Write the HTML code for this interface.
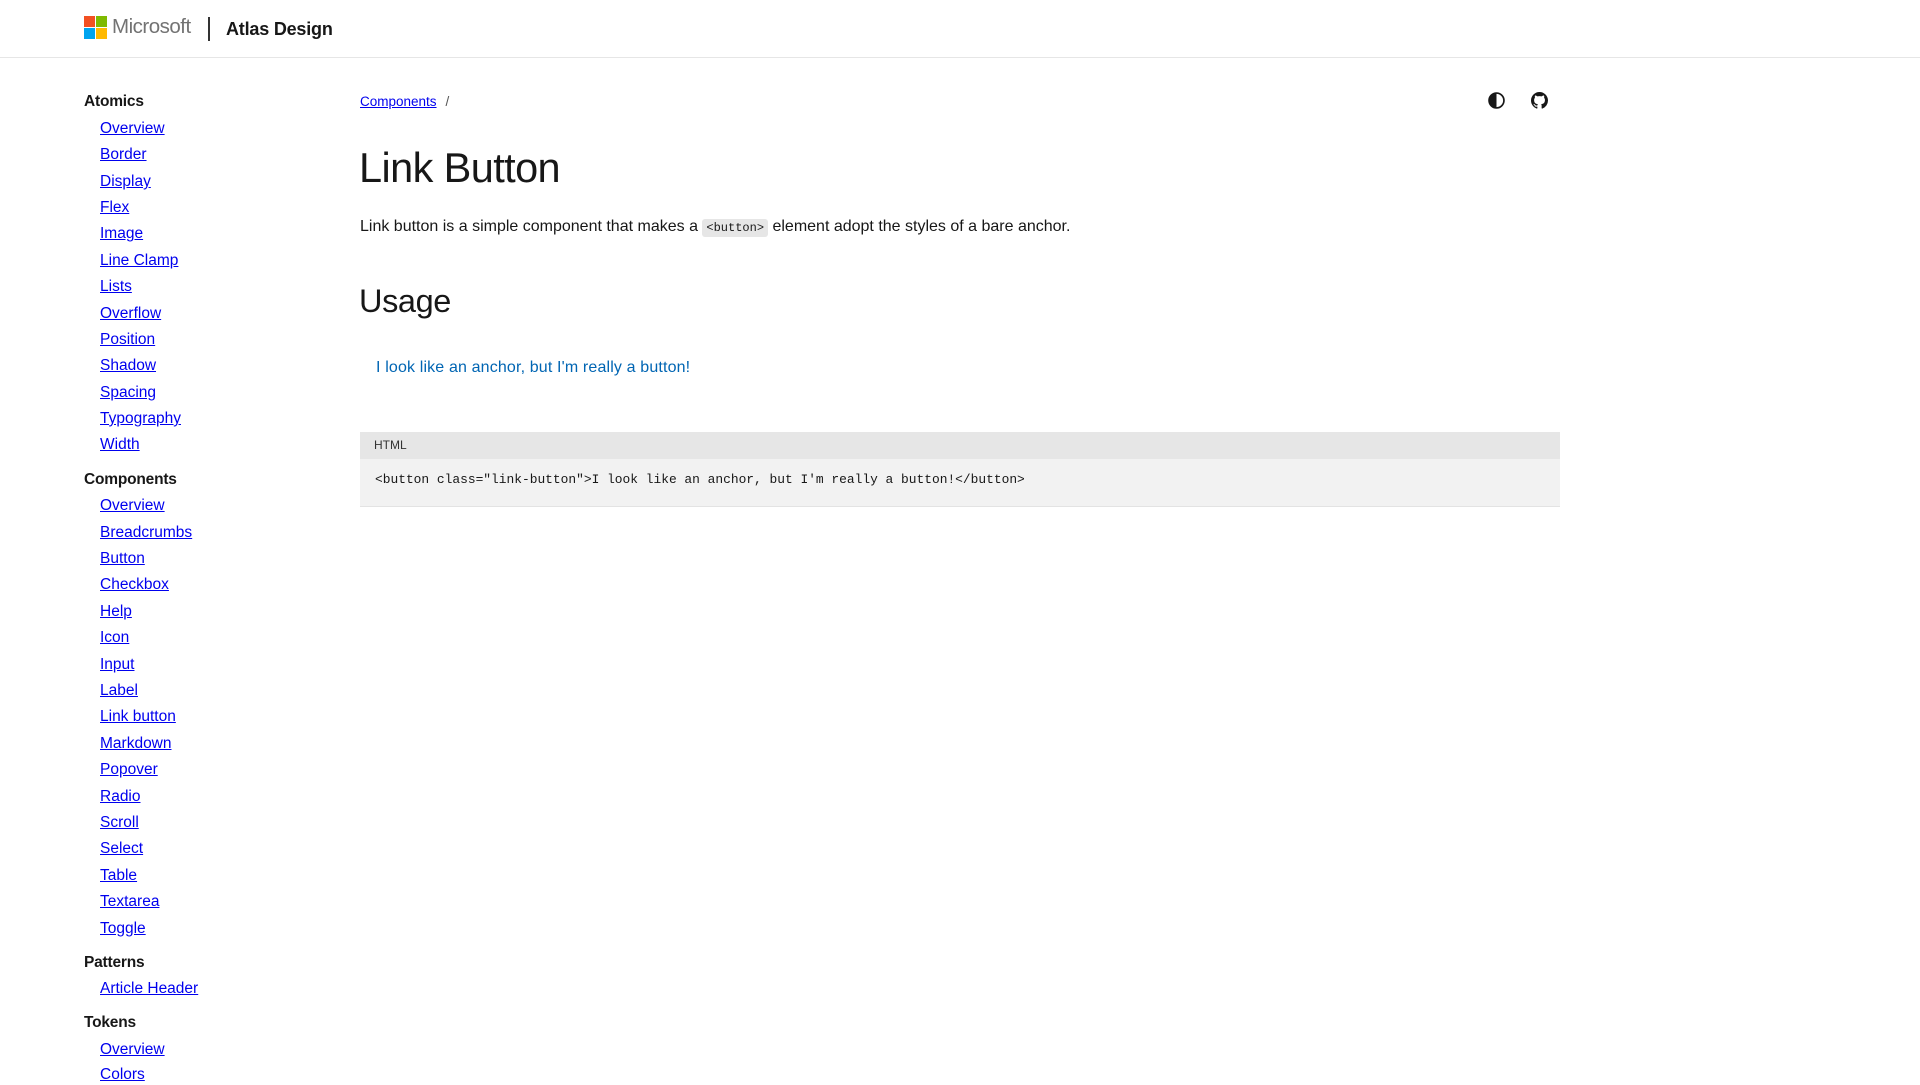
<!DOCTYPE html>
<html><head><meta charset="utf-8"><style>
*{margin:0;padding:0;box-sizing:border-box}
body{width:1920px;height:1080px;background:#fff;font-family:"Liberation Sans",sans-serif;color:#171717;position:relative;overflow:hidden}
.a{position:absolute;white-space:nowrap}
.hdr{position:absolute;left:0;top:0;width:1920px;height:58px;border-bottom:1px solid #e6e6e6}
.nav a{position:absolute;left:100px;color:#0000ee;text-decoration:underline;font-size:15.5px;line-height:20px;white-space:nowrap}
.nav .h{position:absolute;left:84px;font-size:15.5px;line-height:20px;color:#171717;font-weight:600;letter-spacing:-0.2px;white-space:nowrap}
.nav{position:absolute;left:0;top:2px;width:300px;height:1078px}
</style></head><body>
<div class="hdr">
 <div class="a" style="left:84px;top:16px;width:11px;height:11px;background:#f25022"></div>
 <div class="a" style="left:96px;top:16px;width:11px;height:11px;background:#7fba00"></div>
 <div class="a" style="left:84px;top:28px;width:11px;height:11px;background:#00a4ef"></div>
 <div class="a" style="left:96px;top:28px;width:11px;height:11px;background:#ffb900"></div>
 <div class="a" style="left:112px;top:15px;font-size:20.5px;color:#737373;letter-spacing:-0.5px;line-height:24px">Microsoft</div>
 <div class="a" style="left:208px;top:17px;width:2px;height:24px;background:#333"></div>
 <div class="a" style="left:226px;top:17px;font-size:18px;font-weight:bold;color:#171717;letter-spacing:-0.2px;line-height:24px">Atlas Design</div>
</div>
<div class="nav">
 <div class="h" style="top:90px">Atomics</div>
 <a style="top:117px">Overview</a><a style="top:143px">Border</a><a style="top:170px">Display</a><a style="top:196px">Flex</a><a style="top:222px">Image</a><a style="top:249px">Line Clamp</a><a style="top:275px">Lists</a><a style="top:302px">Overflow</a><a style="top:328px">Position</a><a style="top:354px">Shadow</a><a style="top:381px">Spacing</a><a style="top:407px">Typography</a><a style="top:433px">Width</a>
 <div class="h" style="top:468px">Components</div>
 <a style="top:494px">Overview</a><a style="top:521px">Breadcrumbs</a><a style="top:547px">Button</a><a style="top:573px">Checkbox</a><a style="top:600px">Help</a><a style="top:626px">Icon</a><a style="top:653px">Input</a><a style="top:679px">Label</a><a style="top:705px">Link button</a><a style="top:732px">Markdown</a><a style="top:758px">Popover</a><a style="top:785px">Radio</a><a style="top:811px">Scroll</a><a style="top:837px">Select</a><a style="top:864px">Table</a><a style="top:890px">Textarea</a><a style="top:917px">Toggle</a>
 <div class="h" style="top:951px">Patterns</div>
 <a style="top:977px">Article Header</a>
 <div class="h" style="top:1011px">Tokens</div>
 <a style="top:1038px">Overview</a><a style="top:1063px">Colors</a>
</div>
<div class="a" style="left:360px;top:93px;font-size:13.5px;line-height:17px"><span style="color:#0000ee;text-decoration:underline">Components</span><span style="color:#555;margin-left:9px">/</span></div>
<svg class="a" style="left:1488px;top:92px" width="17" height="17" viewBox="0 0 16 16"><circle cx="8" cy="8" r="7" fill="none" stroke="#171717" stroke-width="1.6"/><path d="M8 1a7 7 0 0 0 0 14z" fill="#171717"/></svg>
<svg class="a" style="left:1531px;top:92px" width="17" height="17" viewBox="0 0 16 16"><path fill="#171717" d="M8 0C3.58 0 0 3.58 0 8c0 3.54 2.29 6.53 5.47 7.59.4.07.55-.17.55-.38 0-.19-.01-.82-.01-1.49-2.01.37-2.53-.49-2.69-.94-.09-.23-.48-.94-.82-1.13-.28-.15-.68-.52-.01-.53.63-.01 1.08.58 1.23.82.72 1.21 1.87.87 2.33.66.07-.52.28-.87.51-1.07-1.78-.2-3.64-.89-3.64-3.95 0-.87.31-1.59.82-2.15-.08-.2-.36-1.02.08-2.12 0 0 .67-.21 2.2.82.64-.18 1.32-.27 2-.27.68 0 1.36.09 2 .27 1.53-1.04 2.2-.82 2.2-.82.44 1.1.16 1.92.08 2.12.51.56.82 1.27.82 2.15 0 3.07-1.87 3.75-3.65 3.95.29.25.54.73.54 1.48 0 1.07-.01 1.93-.01 2.2 0 .21.15.46.55.38A8.013 8.013 0 0016 8c0-4.42-3.58-8-8-8z"/></svg>
<div class="a" style="left:359px;top:144px;font-size:41.5px;line-height:48px;letter-spacing:-0.6px">Link Button</div>
<div class="a" style="left:360px;top:217px;font-size:16px;line-height:20px;letter-spacing:0">Link button is a simple component that makes a <span style="font-family:'Liberation Mono',monospace;font-size:12px;background:#e6e6e6;padding:2px 4px;border-radius:3px;letter-spacing:0">&lt;button&gt;</span> element adopt the styles of a bare anchor.</div>
<div class="a" style="left:359px;top:281px;font-size:32.5px;line-height:40px;letter-spacing:-0.4px">Usage</div>
<div class="a" style="left:376px;top:358px;font-size:16px;line-height:20px;color:#0065b3;letter-spacing:0.15px">I look like an anchor, but I'm really a button!</div>
<div class="a" style="left:360px;top:432px;width:1200px;height:75px;background:#f2f2f2;border-bottom:1px solid #e3e3e3">
 <div style="height:27px;background:#e6e6e6;font-size:12px;line-height:27px;padding-left:14px;color:#333">HTML</div>
 <div style="font-family:'Liberation Mono',monospace;font-size:12.9px;line-height:16px;padding:13px 0 0 15px;color:#171717;white-space:pre">&lt;button class="link-button"&gt;I look like an anchor, but I'm really a button!&lt;/button&gt;</div>
</div>
</body></html>
